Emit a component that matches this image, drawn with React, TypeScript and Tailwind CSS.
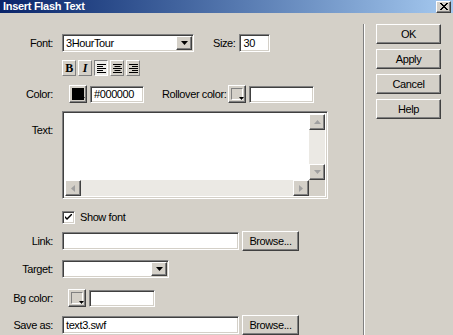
import React from "react";

const sunken =
  "border border-t-[#808080] border-l-[#808080] border-b-white border-r-white shadow-[inset_1px_1px_0_#404040,inset_-1px_-1px_0_#d4d0c8]";
const raised =
  "border border-t-white border-l-white border-b-[#404040] border-r-[#404040] shadow-[inset_-1px_-1px_0_#808080]";

function DownArrow({ color = "#000" }: { color?: string }) {
  return (
    <svg width="7" height="4" viewBox="0 0 7 4">
      <path d="M0 0h7L3.5 4z" fill={color} />
    </svg>
  );
}

function Select({ w, value }: { w: string; value?: string }) {
  return (
    <div className={`${w} h-[18px] ${sunken} bg-white flex items-stretch p-[1px]`}>
      <div className="flex-1 pl-[2px] flex items-center leading-none">{value}</div>
      <div className={`w-[16px] bg-[#d4d0c8] ${raised} flex items-center justify-center`}>
        <DownArrow />
      </div>
    </div>
  );
}

function Input({ w, value, h = "h-[18px]" }: { w: string; value?: string; h?: string }) {
  return (
    <div className={`${w} ${h} ${sunken} bg-white flex items-center pl-[3px] leading-none`}>
      {value}
    </div>
  );
}

function Swatch({ fill }: { fill?: string }) {
  return (
    <div className={`w-[18px] h-[18px] bg-[#d4d0c8] ${raised} relative`}>
      {fill ? (
        <div className="absolute left-[2px] top-[2px] w-[12px] h-[12px]" style={{ background: fill }} />
      ) : (
        <div className="absolute left-[2px] top-[2px] w-[12px] h-[12px] border border-t-[#808080] border-l-[#808080] border-b-white border-r-white" />
      )}
      <div className="absolute right-[1px] bottom-[2px]">
        <svg width="5" height="3" viewBox="0 0 5 3">
          <path d="M0 0h5L2.5 3z" fill="#000" />
        </svg>
      </div>
    </div>
  );
}

function Btn({ label, w = "w-[65px]", h = "h-[20px]" }: { label: string; w?: string; h?: string }) {
  return (
    <div className={`${w} ${h} bg-[#d4d0c8] ${raised} flex items-center justify-center leading-none`}>
      {label}
    </div>
  );
}

function Row({
  label,
  h,
  mt,
  children,
  top,
}: {
  label?: string;
  h: string;
  mt: string;
  children: React.ReactNode;
  top?: boolean;
}) {
  return (
    <div className={`flex ${top ? "items-start" : "items-center"} ${h} ${mt}`}>
      <div className={`w-[53px] text-right leading-none ${top ? "pt-[14px]" : ""}`}>{label}</div>
      <div className="ml-[9px] flex items-center h-full">{children}</div>
    </div>
  );
}

function AlignIcon({ kind }: { kind: "l" | "c" | "r" }) {
  const long = 9;
  const short = 6;
  const xs = (len: number) => (kind === "l" ? 0 : kind === "c" ? (long - len) / 2 : long - len);
  const lines = [long, short, long, short, long];
  return (
    <svg width="9" height="9" viewBox="0 0 9 9">
      {lines.map((len, i) => (
        <rect key={i} x={xs(len)} y={i * 2} width={len} height="1" fill="#000" />
      ))}
    </svg>
  );
}

function StyleBtn({ children, pressed }: { children: React.ReactNode; pressed?: boolean }) {
  return (
    <div
      className={`w-[14px] h-[16px] flex items-center justify-center ${
        pressed
          ? "bg-[#eeede9] border border-t-[#808080] border-l-[#808080] border-b-white border-r-white"
          : "bg-[#d4d0c8] border border-t-white border-l-white border-b-[#808080] border-r-[#808080]"
      }`}
    >
      {children}
    </div>
  );
}

function ScrollArrow({ dir }: { dir: "up" | "down" | "left" | "right" }) {
  const paths: Record<string, string> = {
    up: "M0 4h7L3.5 0z",
    down: "M0 0h7L3.5 4z",
    left: "M4 0v7L0 3.5z",
    right: "M0 0v7L4 3.5z",
  };
  const vert = dir === "up" || dir === "down";
  return (
    <div className={`w-[16px] h-[16px] bg-[#d4d0c8] ${raised} flex items-center justify-center`}>
      <svg width={vert ? 7 : 4} height={vert ? 4 : 7} viewBox={vert ? "0 0 7 4" : "0 0 4 7"}>
        <path d={paths[dir]} fill="#a0a0a0" />
      </svg>
    </div>
  );
}

export default function App() {
  return (
    <div
      className="w-[453px] h-[335px] overflow-hidden bg-[#d4d0c8] flex flex-col text-[11px] text-black tracking-[-0.4px]"
      style={{ fontFamily: '"Liberation Sans", Arial, sans-serif' }}
    >
      {/* Title bar */}
      <div className="h-[14px] flex items-center justify-between bg-gradient-to-r from-[#0a246a] to-[#a6caf0] pl-[3px] pr-[2px]">
        <span className="text-white text-[11px] font-bold leading-none tracking-[-0.3px]">Insert Flash Text</span>
        <div className={`w-[15px] h-[12px] bg-[#d4d0c8] ${raised} flex items-center justify-center`}>
          <svg width="8" height="7" viewBox="0 0 8 7">
            <path d="M0 0L7 7M1 0L8 7M7 0L0 7M8 0L1 7" stroke="#000" strokeWidth="1" />
          </svg>
        </div>
      </div>

      <div className="flex flex-1">
        {/* Left form */}
        <div className="w-[363px] flex flex-col">
          <Row label="Font:" h="h-[18px]" mt="mt-[21px]">
            <Select w="w-[132px]" value="3HourTour" />
            <span className="ml-[19px] mr-[4px] leading-none">Size:</span>
            <Input w="w-[31px]" value="30" />
          </Row>

          <Row h="h-[16px]" mt="mt-[8px]">
            <div className="flex gap-[2px]">
              <StyleBtn>
                <span className="font-bold text-[12px] leading-none" style={{ fontFamily: '"Liberation Serif", serif' }}>
                  B
                </span>
              </StyleBtn>
              <StyleBtn>
                <span className="italic font-bold text-[12px] leading-none" style={{ fontFamily: '"Liberation Serif", serif' }}>
                  I
                </span>
              </StyleBtn>
              <StyleBtn pressed>
                <AlignIcon kind="l" />
              </StyleBtn>
              <StyleBtn>
                <AlignIcon kind="c" />
              </StyleBtn>
              <StyleBtn>
                <AlignIcon kind="r" />
              </StyleBtn>
            </div>
          </Row>

          <Row label="Color:" h="h-[18px]" mt="mt-[9px]">
            <div className="ml-[7px]">
              <Swatch fill="#000" />
            </div>
            <div className="ml-[3px]">
              <Input w="w-[54px]" h="h-[17px]" value="#000000" />
            </div>
            <span className="ml-[18px] mr-[2px] leading-none">Rollover color:</span>
            <Swatch />
            <div className="ml-[3px]">
              <Input w="w-[65px]" h="h-[17px]" />
            </div>
          </Row>

          <Row label="Text:" h="h-[88px]" mt="mt-[8px]" top>
            <div className={`w-[266px] h-[88px] ${sunken} bg-white p-[2px] flex flex-col`}>
              <div className="flex flex-1">
                <div className="flex-1" />
                <div className="w-[16px] flex flex-col bg-[#ebe9e4]">
                  <ScrollArrow dir="up" />
                  <div className="flex-1" />
                  <ScrollArrow dir="down" />
                </div>
              </div>
              <div className="flex h-[16px]">
                <div className="flex-1 flex bg-[#ebe9e4]">
                  <ScrollArrow dir="left" />
                  <div className="flex-1" />
                  <ScrollArrow dir="right" />
                </div>
                <div className="w-[16px] bg-[#d4d0c8]" />
              </div>
            </div>
          </Row>

          <Row h="h-[14px]" mt="mt-[11px]">
            <div className={`w-[13px] h-[13px] ${sunken} bg-white flex items-center justify-center`}>
              <svg width="7" height="7" viewBox="0 0 7 7">
                <path d="M0 2v2l2 2 5-5V-1L2 4z" fill="#000" />
              </svg>
            </div>
            <span className="ml-[5px] leading-none">Show font</span>
          </Row>

          <Row label="Link:" h="h-[20px]" mt="mt-[7px]">
            <Input w="w-[177px]" />
            <div className="ml-[3px]">
              <Btn label="Browse..." w="w-[57px]" />
            </div>
          </Row>

          <Row label="Target:" h="h-[18px]" mt="mt-[9px]">
            <Select w="w-[107px]" />
          </Row>

          <Row label="Bg color:" h="h-[18px]" mt="mt-[11px]">
            <div className="ml-[6px]">
              <Swatch />
            </div>
            <div className="ml-[3px]">
              <Input w="w-[66px]" h="h-[17px]" />
            </div>
          </Row>

          <Row label="Save as:" h="h-[20px]" mt="mt-[8px]">
            <Input w="w-[177px]" value="text3.swf" />
            <div className="ml-[3px]">
              <Btn label="Browse..." w="w-[57px]" />
            </div>
          </Row>
        </div>

        {/* Separator */}
        <div className="mt-[11px] w-[2px] border-l border-l-[#808080] border-r border-r-white" />

        {/* Right buttons */}
        <div className="pl-[11px] pt-[11px] flex flex-col gap-[5px]">
          <Btn label="OK" />
          <Btn label="Apply" />
          <Btn label="Cancel" />
          <Btn label="Help" />
        </div>
      </div>
    </div>
  );
}
